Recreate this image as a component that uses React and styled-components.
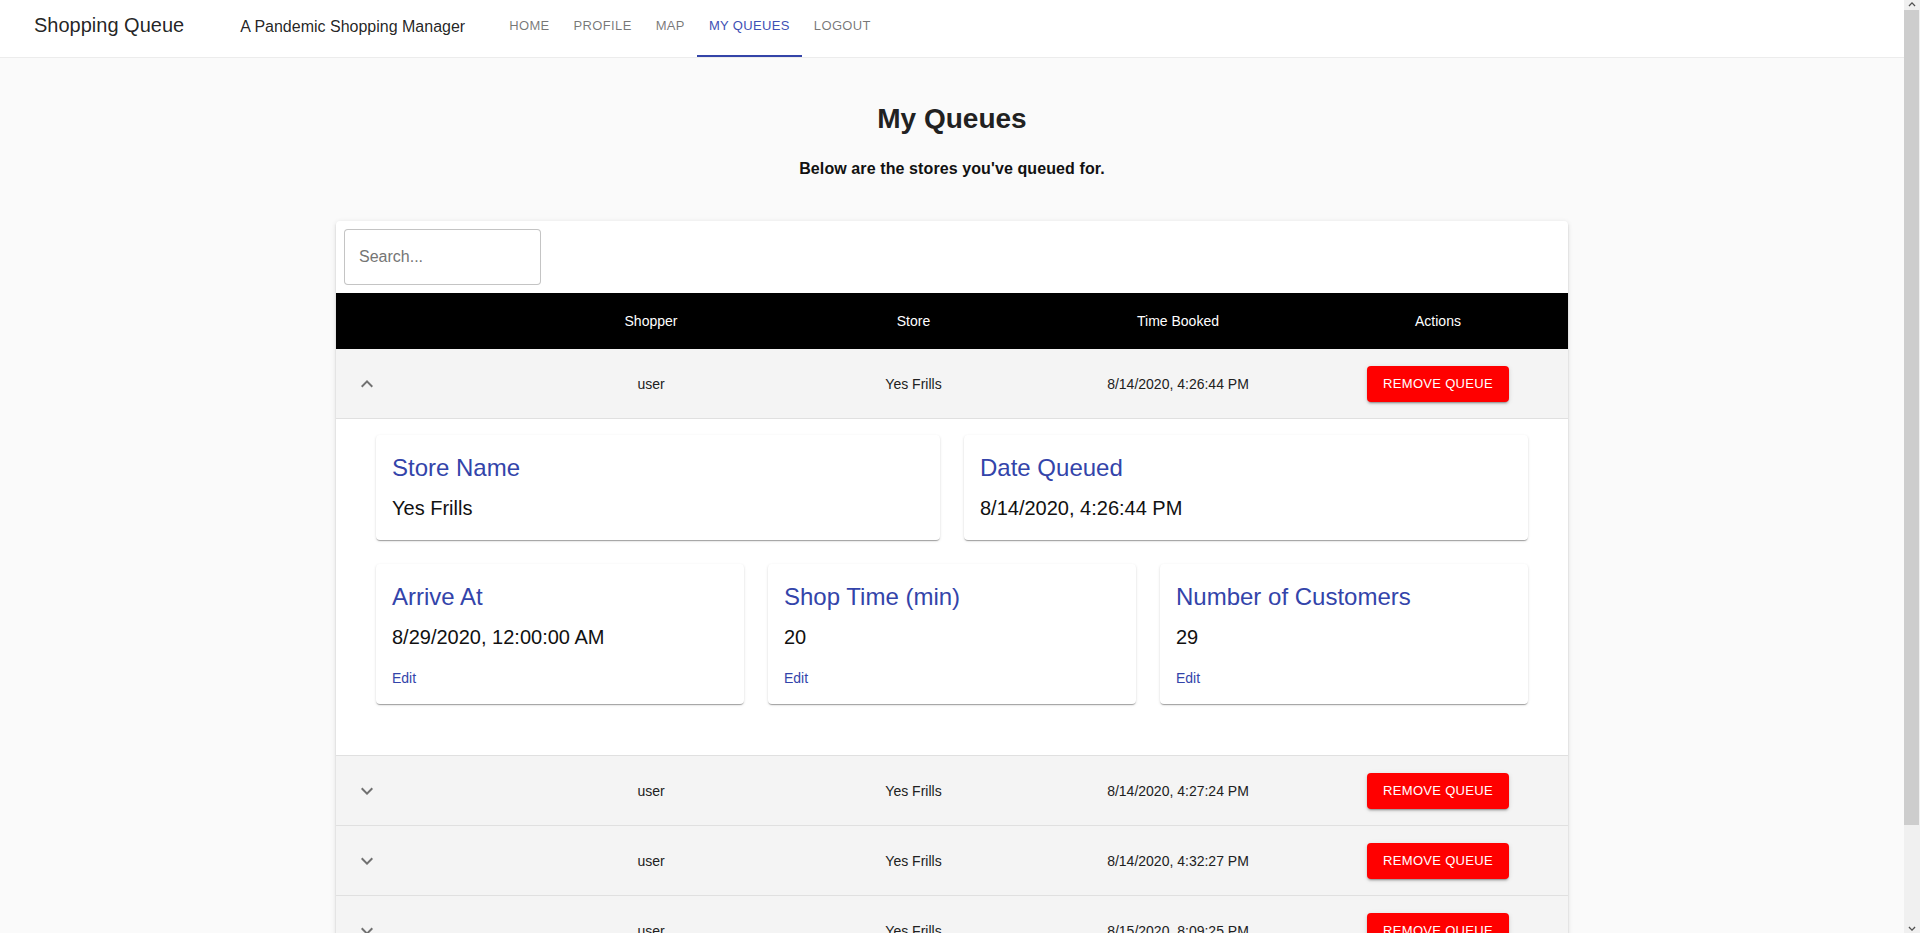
import React from "react";
import styled, { createGlobalStyle } from "styled-components";

const GlobalStyle = createGlobalStyle`
  html, body { margin: 0; padding: 0; }
  body {
    background: #fafafa;
    font-family: "Liberation Sans", Arial, sans-serif;
    color: rgba(0, 0, 0, 0.87);
    padding-right: 16px;
  }
  * { box-sizing: border-box; }
`;

const Nav = styled.nav`
  height: 57px;
  background: #fff;
  display: flex;
  align-items: flex-start;
  padding-left: 34px;
  box-shadow: 0 1px 0 #ececec;
`;

const Brand = styled.div`
  font-size: 20px;
  line-height: 24px;
  margin-top: 13px;
  color: rgba(0, 0, 0, 0.87);
`;

const Tagline = styled.div`
  font-size: 16px;
  line-height: 20px;
  margin-top: 17px;
  margin-left: 56px;
  color: rgba(0, 0, 0, 0.87);
`;

const Tabs = styled.div`
  display: flex;
  margin-left: 32px;
  height: 57px;
`;

const Tab = styled.a`
  height: 57px;
  padding: 16px 12px 0;
  font-size: 13px;
  line-height: 20px;
  text-transform: uppercase;
  letter-spacing: 0.35px;
  color: ${(p) => (p.$active ? "#3f51b5" : "rgba(0, 0, 0, 0.54)")};
  border-bottom: 2px solid ${(p) => (p.$active ? "#3444a8" : "transparent")};
  cursor: pointer;
`;

const Main = styled.main`
  padding-top: 46px;
  display: flex;
  flex-direction: column;
  align-items: center;
`;

const Title = styled.h1`
  margin: 0;
  font-size: 28px;
  line-height: 32px;
  font-weight: 700;
  color: #212121;
`;

const Subtitle = styled.p`
  margin: 24px 0 0;
  font-size: 16px;
  line-height: 20px;
  font-weight: 700;
  letter-spacing: 0.1px;
  color: #111;
`;

const TableCard = styled.section`
  width: 1232px;
  margin: 42px 0 12px;
  background: #fff;
  border-radius: 4px;
  box-shadow: 0px 3px 1px -2px rgba(0, 0, 0, 0.2),
    0px 2px 2px 0px rgba(0, 0, 0, 0.14), 0px 1px 5px 0px rgba(0, 0, 0, 0.12);
`;

const Toolbar = styled.div`
  padding: 8px;
  display: flex;
`;

const SearchInput = styled.input`
  width: 197px;
  height: 56px;
  border: 1px solid rgba(0, 0, 0, 0.23);
  border-radius: 4px;
  padding: 0 14px;
  font-family: inherit;
  font-size: 16px;
  color: rgba(0, 0, 0, 0.87);
  background: #fff;
  outline: none;
  &::placeholder {
    color: #757575;
    opacity: 1;
  }
`;

const columns = "187px 256px 269px 260px 260px";

const HeaderRow = styled.div`
  display: grid;
  grid-template-columns: ${columns};
  height: 56px;
  background: #000;
  color: #fff;
  font-size: 14px;
  align-items: center;
  text-align: center;
`;

const Row = styled.div`
  display: grid;
  grid-template-columns: ${columns};
  height: 70px;
  background: #f4f4f4;
  border-bottom: 1px solid #e0e0e0;
  font-size: 14px;
  color: #212121;
  align-items: center;
  text-align: center;
`;

const ExpandCell = styled.div`
  display: flex;
  align-items: center;
  padding-left: 19px;
`;

const IconBox = styled.svg`
  width: 24px;
  height: 24px;
  fill: rgba(0, 0, 0, 0.54);
`;

const Cell = styled.div``;

const RemoveButton = styled.button`
  height: 36px;
  padding: 0 16px;
  border: none;
  border-radius: 4px;
  background: #ff0000;
  color: #fff;
  font-family: inherit;
  font-size: 13px;
  letter-spacing: 0.3px;
  text-transform: uppercase;
  cursor: pointer;
  box-shadow: 0px 3px 1px -2px rgba(0, 0, 0, 0.2),
    0px 2px 2px 0px rgba(0, 0, 0, 0.14), 0px 1px 5px 0px rgba(0, 0, 0, 0.12);
`;

const Panel = styled.div`
  padding: 16px 40px 51px;
  border-bottom: 1px solid #e0e0e0;
  background: #fff;
  display: grid;
  grid-template-columns: repeat(6, 1fr);
  gap: 24px;
`;

const InfoCard = styled.div`
  grid-column: span ${(p) => p.$span};
  background: #fff;
  border-radius: 4px;
  padding: 17px 16px 16px;
  box-shadow: 0px 2px 1px -1px rgba(0, 0, 0, 0.2),
    0px 1px 1px 0px rgba(0, 0, 0, 0.14), 0px 1px 3px 0px rgba(0, 0, 0, 0.12);
`;

const CardTitle = styled.div`
  font-size: 24px;
  line-height: 32px;
  color: #3344aa;
`;

const CardValue = styled.div`
  margin-top: 8px;
  font-size: 20px;
  line-height: 32px;
  color: #111;
`;

const EditLink = styled.a`
  display: block;
  margin-top: 15px;
  font-size: 14px;
  line-height: 20px;
  color: #3344aa;
  cursor: pointer;
`;

const Footer = styled.div`
  height: 52px;
`;

/* window scrollbar, drawn over the right edge of the viewport */
const ScrollTrack = styled.div`
  position: fixed;
  top: 0;
  right: 0;
  bottom: 0;
  width: 16px;
  background: #f0f0f0;
  display: flex;
  flex-direction: column;
`;

const ScrollArrow = styled.svg`
  width: 16px;
  height: 10px;
  flex-shrink: 0;
  fill: #505050;
`;

const ScrollThumb = styled.div`
  width: 15px;
  height: 815px;
  background: #cdcdcd;
`;

const ScrollSpacer = styled.div`
  flex: 1;
`;

const ChevronUp = () => (
  <IconBox viewBox="0 0 24 24">
    <path d="M7.41 15.41L12 10.83l4.59 4.58L18 14l-6-6-6 6z" />
  </IconBox>
);

const ChevronDown = () => (
  <IconBox viewBox="0 0 24 24">
    <path d="M7.41 8.59L12 13.17l4.59-4.58L18 10l-6 6-6-6 1.41-1.41z" />
  </IconBox>
);

const queues = [
  { shopper: "user", store: "Yes Frills", time: "8/14/2020, 4:26:44 PM", open: true },
  { shopper: "user", store: "Yes Frills", time: "8/14/2020, 4:27:24 PM" },
  { shopper: "user", store: "Yes Frills", time: "8/14/2020, 4:32:27 PM" },
  { shopper: "user", store: "Yes Frills", time: "8/15/2020, 8:09:25 PM" },
];

const QueueRow = ({ q }) => (
  <>
    <Row>
      <ExpandCell>{q.open ? <ChevronUp /> : <ChevronDown />}</ExpandCell>
      <Cell>{q.shopper}</Cell>
      <Cell>{q.store}</Cell>
      <Cell>{q.time}</Cell>
      <Cell>
        <RemoveButton>Remove Queue</RemoveButton>
      </Cell>
    </Row>
    {q.open && (
      <Panel>
        <InfoCard $span={3}>
          <CardTitle>Store Name</CardTitle>
          <CardValue>Yes Frills</CardValue>
        </InfoCard>
        <InfoCard $span={3}>
          <CardTitle>Date Queued</CardTitle>
          <CardValue>8/14/2020, 4:26:44 PM</CardValue>
        </InfoCard>
        <InfoCard $span={2}>
          <CardTitle>Arrive At</CardTitle>
          <CardValue>8/29/2020, 12:00:00 AM</CardValue>
          <EditLink>Edit</EditLink>
        </InfoCard>
        <InfoCard $span={2}>
          <CardTitle>Shop Time (min)</CardTitle>
          <CardValue>20</CardValue>
          <EditLink>Edit</EditLink>
        </InfoCard>
        <InfoCard $span={2}>
          <CardTitle>Number of Customers</CardTitle>
          <CardValue>29</CardValue>
          <EditLink>Edit</EditLink>
        </InfoCard>
      </Panel>
    )}
  </>
);

export default function App() {
  return (
    <>
      <GlobalStyle />
      <Nav>
        <Brand>Shopping Queue</Brand>
        <Tagline>A Pandemic Shopping Manager</Tagline>
        <Tabs>
          <Tab>Home</Tab>
          <Tab>Profile</Tab>
          <Tab>Map</Tab>
          <Tab $active>My Queues</Tab>
          <Tab>Logout</Tab>
        </Tabs>
      </Nav>
      <Main>
        <Title>My Queues</Title>
        <Subtitle>Below are the stores you've queued for.</Subtitle>
        <TableCard>
          <Toolbar>
            <SearchInput placeholder="Search..." />
          </Toolbar>
          <HeaderRow>
            <Cell />
            <Cell>Shopper</Cell>
            <Cell>Store</Cell>
            <Cell>Time Booked</Cell>
            <Cell>Actions</Cell>
          </HeaderRow>
          {queues.map((q, i) => (
            <QueueRow key={i} q={q} />
          ))}
          <Footer />
        </TableCard>
      </Main>
      <ScrollTrack aria-hidden="true">
        <ScrollArrow viewBox="0 0 16 10">
          <path d="M4.5 5.5L8 2l3.5 3.5-.9.9L8 3.8 5.4 6.4z" />
        </ScrollArrow>
        <ScrollThumb />
        <ScrollSpacer />
        <ScrollArrow viewBox="0 0 16 10">
          <path d="M4.5 4.5L8 8l3.5-3.5-.9-.9L8 6.2 5.4 3.6z" />
        </ScrollArrow>
      </ScrollTrack>
    </>
  );
}
